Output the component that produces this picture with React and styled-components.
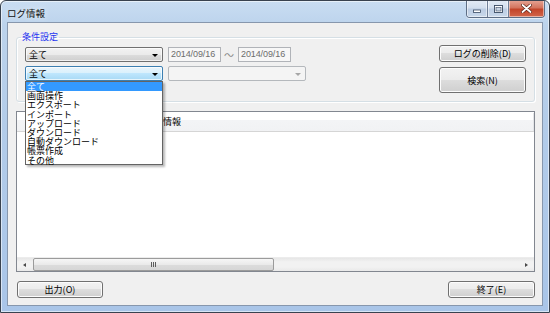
import React from 'react';
import styled, { createGlobalStyle } from 'styled-components';

const GlobalStyle = createGlobalStyle`
  html, body { margin: 0; padding: 0; background: #ffffff; }
  body { font-family: "Noto Sans CJK JP", "Noto Sans", sans-serif; }
`;

const ui = `"Noto Sans CJK JP", "Noto Sans", sans-serif`;

const Window = styled.div`
  width: 550px;
  height: 313px;
  box-sizing: border-box;
  display: flex;
  flex-direction: column;
  border: 1px solid #39424f;
  border-radius: 6px 6px 0 0;
  background: linear-gradient(180deg, #c9ddf2 0%, #bcd3ec 8%, #b3cce9 40%, #a9c5e8 100%);
  box-shadow: inset 0 0 0 1px rgba(255, 255, 255, 0.55);
  overflow: hidden;
`;

const TitleBar = styled.div`
  height: 21px;
  display: flex;
  align-items: flex-start;
  justify-content: space-between;
`;

const Title = styled.div`
  font-family: ${ui};
  font-size: 9.5px;
  line-height: 10px;
  color: #101010;
  padding: 7px 0 0 6px;
  text-shadow: 0 0 6px rgba(255, 255, 255, 0.9);
`;

const Controls = styled.div`
  display: flex;
  margin-right: 4px;
  margin-top: -1px;
  border: 1px solid #5e6e85;
  border-top: none;
  border-radius: 0 0 4px 4px;
  overflow: hidden;
  box-shadow: 0 1px 0 rgba(255, 255, 255, 0.6);
`;

const CtrlButton = styled.div`
  width: ${p => p.$w}px;
  height: 17px;
  display: flex;
  align-items: center;
  justify-content: center;
  border-left: ${p => (p.$first ? 'none' : '1px solid #6f7f97')};
  background: ${p =>
    p.$close
      ? 'linear-gradient(180deg, #e7a697 0%, #d4755f 45%, #c3452a 55%, #d2674c 100%)'
      : 'linear-gradient(180deg, #e4ecf6 0%, #d3dfee 45%, #bccde3 55%, #c9d8ea 100%)'};
  box-shadow: inset 0 0 0 1px rgba(255, 255, 255, 0.5);
`;

const Client = styled.div`
  flex: 1;
  margin: 0 6px 6px 6px;
  background: #f0f0f0;
  border: 1px solid #8797ad;
  display: flex;
  flex-direction: column;
  padding: 0 7px 7px 8px;
  position: relative;
`;

const Group = styled.fieldset`
  margin: 9px 0 0 0;
  padding: 3px 8px 8px 8px;
  border: 1px solid #d5dfe5;
  border-radius: 3px;
  min-width: 0;
  display: flex;
  align-items: flex-start;
  box-shadow: inset 1px 1px 0 #ffffff, 1px 1px 0 #ffffff;
`;

const Legend = styled.legend`
  font-family: ${ui};
  font-size: 9px;
  line-height: 10px;
  color: #1f35f0;
  padding: 0 1px;
  margin-left: -4px;
`;

const Fields = styled.div`
  display: grid;
  grid-template-rows: 15px 15px;
  row-gap: 4px;
  margin-top: 2px;
`;

const FieldRow = styled.div`
  display: flex;
  align-items: flex-start;
  gap: 5px;
`;

const ComboBox = styled.div`
  box-sizing: border-box;
  width: 138px;
  height: 15px;
  border-radius: 2px;
  display: flex;
  align-items: center;
  justify-content: space-between;
  padding: 0 4px 0 3px;
  font-family: ${ui};
  font-size: 9px;
  color: #000;
  border: 1px solid ${p => (p.$state === 'hot' ? '#3c7fb1' : p.$state === 'disabled' ? '#b4b8bc' : '#707070')};
  background: ${p =>
    p.$state === 'hot'
      ? 'linear-gradient(180deg, #eaf6fd 0%, #d9f0fc 50%, #bee6fd 50%, #a7d9f5 100%)'
      : p.$state === 'disabled'
      ? '#f4f4f4'
      : 'linear-gradient(180deg, #f2f2f2 0%, #ebebeb 50%, #dddddd 50%, #cfcfcf 100%)'};
  box-shadow: ${p => (p.$state === 'disabled' ? 'none' : 'inset 0 0 0 1px rgba(255,255,255,0.7)')};
`;

const Arrow = styled.span`
  width: 0;
  height: 0;
  border-left: 3px solid transparent;
  border-right: 3px solid transparent;
  border-top: 3px solid ${p => (p.$disabled ? '#a6a6a6' : '#000')};
  margin-top: 1px;
`;

const DateBox = styled.div`
  box-sizing: border-box;
  width: 53px;
  height: 15px;
  border: 1px solid #b0b3b8;
  background: #f7f7f7;
  font-family: "Liberation Sans", Arial, sans-serif;
  font-size: 9px;
  line-height: 13px;
  color: #6d6d6d;
  padding-left: 2px;
  letter-spacing: -0.1px;
`;

const Tilde = styled.span`
  font-family: ${ui};
  font-size: 10px;
  line-height: 15px;
  color: #8a8a8a;
  margin: 0 -1px 0 -2px;
`;

const SideButtons = styled.div`
  margin-left: auto;
  display: flex;
  flex-direction: column;
  gap: 5px;
`;

const Button = styled.button`
  box-sizing: border-box;
  width: ${p => p.$w || 87}px;
  height: ${p => p.$h || 17}px;
  margin: 0;
  padding: 0;
  border: 1px solid #707070;
  border-radius: 3px;
  background: linear-gradient(180deg, #f2f2f2 0%, #ebebeb 50%, #dddddd 50%, #cfcfcf 100%);
  box-shadow: inset 0 0 0 1px #fcfcfc;
  font-family: ${ui};
  font-size: 9px;
  color: #000;
  line-height: 1;
  text-align: center;
`;

const ListView = styled.div`
  flex: 1;
  margin-top: 9px;
  border: 1px solid #828790;
  background: #ffffff;
  display: flex;
  flex-direction: column;
`;

const Header = styled.div`
  height: 18px;
  display: flex;
  background: linear-gradient(180deg, #ffffff 0%, #ffffff 40%, #f3f4f6 41%, #f1f2f4 100%);
  border-bottom: 1px solid #d5d5d5;
  margin-top: 1px;
`;

const HeaderCell = styled.div`
  width: ${p => (p.$w ? `${p.$w}px` : 'auto')};
  flex: ${p => (p.$w ? 'none' : 1)};
  box-sizing: border-box;
  border-right: 1px solid #e3e5e8;
  font-family: ${ui};
  font-size: 9px;
  line-height: 18px;
  padding-left: 4px;
  color: #000;
`;

const ListBody = styled.div`
  flex: 1;
`;

const HScroll = styled.div`
  height: 13px;
  display: flex;
  align-items: stretch;
  background: linear-gradient(180deg, #e6e6e6 0%, #f2f2f2 30%, #f2f2f2 70%, #e9e9e9 100%);
  border-top: 1px solid #ececec;
`;

const ScrollArrow = styled.div`
  width: 15px;
  display: flex;
  align-items: center;
  justify-content: center;
`;

const ArrowTri = styled.span`
  width: 0;
  height: 0;
  border-top: 2.5px solid transparent;
  border-bottom: 2.5px solid transparent;
  ${p => (p.$dir === 'left' ? 'border-right: 3px solid #4a4a4a;' : 'border-left: 3px solid #4a4a4a;')}
`;

const Track = styled.div`
  flex: 1;
  display: flex;
  padding: 0 1px;
`;

const Thumb = styled.div`
  width: 241px;
  box-sizing: border-box;
  border: 1px solid #9b9b9b;
  border-radius: 2px;
  background: linear-gradient(180deg, #f6f6f6 0%, #eaeaea 50%, #dcdcdc 51%, #d6d6d6 100%);
  display: flex;
  align-items: center;
  justify-content: center;
  gap: 1px;
`;

const Grip = styled.span`
  width: 1px;
  height: 5px;
  background: #5c5c5c;
`;

const Footer = styled.div`
  margin-top: 9px;
  display: flex;
  justify-content: space-between;
  padding-left: 1px;
`;

const Popup = styled.div`
  position: absolute;
  left: 17px;
  top: 58px;
  width: 138px;
  height: 84px;
  box-sizing: border-box;
  border: 1px solid #646464;
  background: #ffffff;
  box-shadow: 2px 2px 2px rgba(0, 0, 0, 0.28);
  z-index: 5;
`;

const PopupItem = styled.div`
  height: 9.2px;
  font-family: ${ui};
  font-size: 9px;
  line-height: 9.2px;
  padding-left: 1px;
  white-space: nowrap;
  color: ${p => (p.$selected ? '#ffffff' : '#000000')};
  background: ${p => (p.$selected ? '#3399ff' : 'transparent')};
`;

const items = ['全て', '画面操作', 'エクスポート', 'インポート', 'アップロード', 'ダウンロード', '自動ダウンロード', '帳票作成', 'その他'];

export default function App() {
  return (
    <>
      <GlobalStyle />
      <Window>
        <TitleBar>
          <Title>ログ情報</Title>
          <Controls>
            <CtrlButton $w={20} $first>
              <svg width="8" height="8" viewBox="0 0 8 8">
                <rect x="0.5" y="5" width="7" height="2.5" fill="#ffffff" stroke="#394a63" strokeWidth="0.8" />
              </svg>
            </CtrlButton>
            <CtrlButton $w={20}>
              <svg width="9" height="8" viewBox="0 0 9 8">
                <rect x="0.5" y="0.5" width="8" height="7" fill="#ffffff" stroke="#394a63" strokeWidth="0.9" />
                <rect x="2" y="2.5" width="5" height="3.5" fill="#c9d6e6" stroke="#394a63" strokeWidth="0.6" />
              </svg>
            </CtrlButton>
            <CtrlButton $w={35} $close>
              <svg width="11" height="9" viewBox="0 0 11 9">
                <path d="M1.5 1 L9.5 8 M9.5 1 L1.5 8" stroke="#5a2015" strokeWidth="3.2" strokeLinecap="round" />
                <path d="M1.5 1 L9.5 8 M9.5 1 L1.5 8" stroke="#ffffff" strokeWidth="1.8" strokeLinecap="round" />
              </svg>
            </CtrlButton>
          </Controls>
        </TitleBar>
        <Client>
          <Group>
            <Legend>条件設定</Legend>
            <Fields>
              <FieldRow>
                <ComboBox>
                  <span>全て</span>
                  <Arrow />
                </ComboBox>
                <DateBox>2014/09/16</DateBox>
                <Tilde>～</Tilde>
                <DateBox>2014/09/16</DateBox>
              </FieldRow>
              <FieldRow>
                <ComboBox $state="hot">
                  <span>全て</span>
                  <Arrow />
                </ComboBox>
                <ComboBox $state="disabled">
                  <span />
                  <Arrow $disabled />
                </ComboBox>
              </FieldRow>
            </Fields>
            <SideButtons>
              <Button $w={87} $h={17}>ログの削除(D)</Button>
              <Button $w={87} $h={26}>検索(N)</Button>
            </SideButtons>
          </Group>
          <ListView>
            <Header>
              <HeaderCell $w={142} />
              <HeaderCell>情報</HeaderCell>
            </Header>
            <ListBody />
            <HScroll>
              <ScrollArrow>
                <ArrowTri $dir="left" />
              </ScrollArrow>
              <Track>
                <Thumb>
                  <Grip />
                  <Grip />
                  <Grip />
                </Thumb>
              </Track>
              <ScrollArrow>
                <ArrowTri $dir="right" />
              </ScrollArrow>
            </HScroll>
          </ListView>
          <Footer>
            <Button $w={86}>出力(O)</Button>
            <Button $w={87}>終了(E)</Button>
          </Footer>
          <Popup>
            {items.map((t, i) => (
              <PopupItem key={t} $selected={i === 0}>{t}</PopupItem>
            ))}
          </Popup>
        </Client>
      </Window>
    </>
  );
}
